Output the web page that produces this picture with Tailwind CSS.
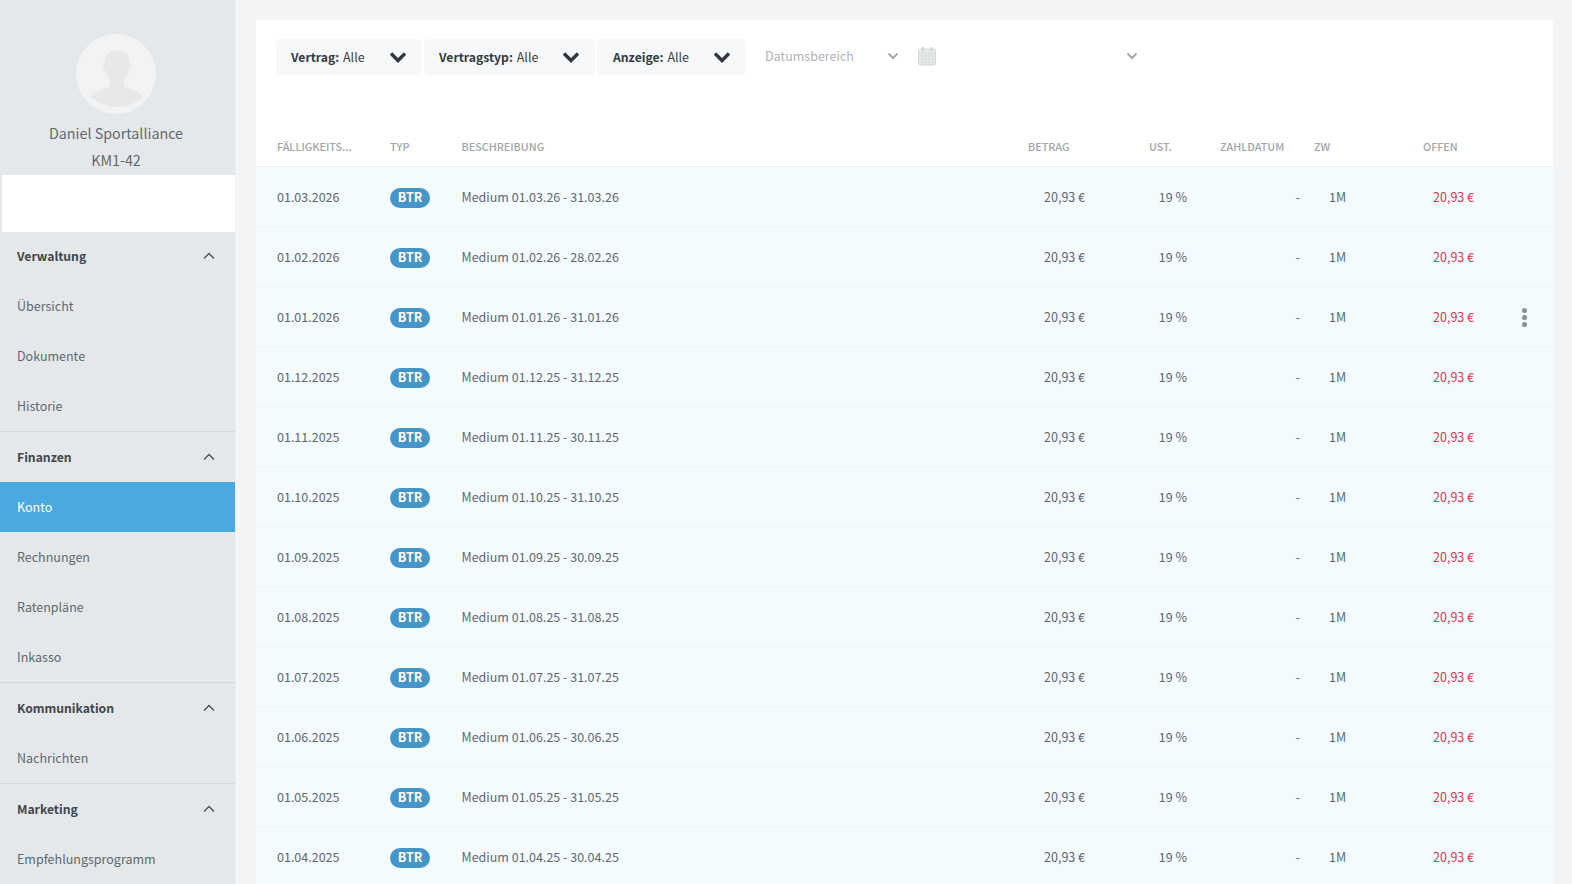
<!DOCTYPE html>
<html lang="de">
  <head>
    <meta charset="UTF-8" />
    <title>Konto</title>
    <script src="https://cdn.jsdelivr.net/npm/@tailwindcss/browser@4"></script>
  </head>
  <body class="h-[884px] overflow-hidden flex bg-[#f2f4f6] text-[#5f686f] text-[12.5px] font-['Noto_Sans_CJK_SC','Liberation_Sans',sans-serif]">
    <!-- Sidebar -->
    <aside class="w-[236px] shrink-0 h-[884px] overflow-hidden bg-[#e5e8eb] border-r border-[#edeff1]">
      <div class="h-[175px] pt-[34px] flex flex-col items-center pr-[3px]">
        <svg class="w-[80px] h-[80px] -ml-[1px]" viewBox="0 0 80 80">
          <circle cx="40" cy="40" r="40" fill="#f3f3f3" />
          <path d="M40.500 16c-7.500 0-12 5-12 12 0 2-1.500 2-1.500 4.500 0 2 1 3 2 3.500 1 4 3 7.500 5 10v5c-1 2-3 3-8 4.500-4 1.200-9 3-11.500 7.500a40 40 0 0 0 53 0c-2.500-4.500-7.500-6.300-11.500-7.500-5-1.500-7-2.500-8-4.500v-5c2-2.500 4-6 5-10 1-.5 2-1.500 2-3.500 0-2.500-1.500-2.500-1.500-4.500 0-7-4.500-12-13-12z" fill="#e8e8e8" />
        </svg>
        <div class="mt-[5px] text-[14.300px] leading-[27px]">Daniel Sportalliance</div>
        <div class="text-[14.300px] leading-[27px]">KM1-42</div>
      </div>
      <div class="h-[57px] ml-[2px] w-[233px] bg-white"></div>
      <nav id="nav" class="w-[235px] -mt-[1px]"></nav>
    </aside>

    <!-- Inhalt -->
    <main class="flex-1 min-w-0 pt-[20px] pl-[20px] pr-[19px]">
      <div class="bg-white h-[864px] overflow-hidden">
        <!-- Filter -->
        <div class="h-[147px] pt-[19px] pl-[20px] flex items-start">
          <div class="w-[146px] h-[36px] rounded-[5px] bg-[#f7f8fa] flex items-center justify-between pl-[15px] pr-[15px] text-[#3b434a]">
            <span><b class="font-bold text-[12.200px] text-[#333b42] mr-[1px]">Vertrag:</b> Alle</span>
            <svg class="w-[18px] h-[12px]" viewBox="0 0 18 12"><path d="M2 2.500l7 7 7-7" fill="none" stroke="#2f3841" stroke-width="3.400" /></svg>
          </div>
          <div class="ml-[2px] w-[171px] h-[36px] rounded-[5px] bg-[#f7f8fa] flex items-center justify-between pl-[15px] pr-[15px] text-[#3b434a]">
            <span><b class="font-bold text-[12.200px] text-[#333b42] mr-[1px]">Vertragstyp:</b> Alle</span>
            <svg class="w-[18px] h-[12px]" viewBox="0 0 18 12"><path d="M2 2.500l7 7 7-7" fill="none" stroke="#2f3841" stroke-width="3.400" /></svg>
          </div>
          <div class="ml-[2px] w-[149px] h-[36px] rounded-[5px] bg-[#f7f8fa] flex items-center justify-between pl-[16px] pr-[15px] text-[#3b434a]">
            <span><b class="font-bold text-[12.200px] text-[#333b42] mr-[1px]">Anzeige:</b> Alle</span>
            <svg class="w-[18px] h-[12px]" viewBox="0 0 18 12"><path d="M2 2.500l7 7 7-7" fill="none" stroke="#2f3841" stroke-width="3.400" /></svg>
          </div>
          <div class="h-[36px] ml-[19px] -mt-[1px] flex items-center text-[#b0b3b7]">
            <span class="w-[122px]">Datumsbereich</span>
            <svg class="w-[12px] h-[8px]" viewBox="0 0 12 8"><path d="M1.500 1.500l4.500 4.500 4.500-4.500" fill="none" stroke="#a6a9ad" stroke-width="2" /></svg>
            <svg class="ml-[19px] w-[18px] h-[20px]" viewBox="0 0 18 20">
              <path d="M.5 4.500a1.500 1.500 0 0 1 1.500-1.500h14a1.500 1.500 0 0 1 1.500 1.500v13a1.500 1.500 0 0 1-1.500 1.500h-14a1.500 1.500 0 0 1-1.500-1.500z" fill="#eceded" stroke="#d3d5d8" />
              <path d="M.5 7h17M.5 10h17M.5 13h17M.5 16h17M4 7v12M7.500 7v12M11 7v12M14.500 7v12" stroke="#d3d5d8" stroke-width=".8" />
              <rect x="3.500" y="1" width="2.500" height="4.500" rx="1.200" fill="#d3d5d8" />
              <rect x="12" y="1" width="2.500" height="4.500" rx="1.200" fill="#d3d5d8" />
            </svg>
            <svg class="ml-[190px] -mt-[1px] w-[12px] h-[8px]" viewBox="0 0 12 8"><path d="M1.500 1.500l4.500 4.500 4.500-4.500" fill="none" stroke="#a6a9ad" stroke-width="2" /></svg>
          </div>
        </div>

        <!-- Tabelle -->
        <div class="-mt-[30px] h-[18px] pl-[21px] grid grid-cols-[113px_71.500px_566.500px_121px_71px_94px_109px_1fr] items-center text-[10.800px] font-medium text-[#a2a5a9]">
          <span>FÄLLIGKEITS...</span>
          <span>TYP</span>
          <span>BESCHREIBUNG</span>
          <span>BETRAG</span>
          <span>UST.</span>
          <span>ZAHLDATUM</span>
          <span>ZW</span>
          <span>OFFEN</span>
        </div>
        <div id="rows" class="mt-[11px] border-t border-[#edf2f4]"></div>
      </div>
    </main>

    <script>
      const chevron =
        '<svg class="w-[12px] h-[8px]" viewBox="0 0 12 8"><path d="M1 6.500l5-5 5 5" fill="none" stroke="#4a5158" stroke-width="1.400" /></svg>';

      const menu = [
        ["Verwaltung", ["Übersicht", "Dokumente", "Historie"]],
        ["Finanzen", ["Konto", "Rechnungen", "Ratenpläne", "Inkasso"]],
        ["Kommunikation", ["Nachrichten"]],
        ["Marketing", ["Empfehlungsprogramm"]],
      ];

      document.getElementById("nav").innerHTML = menu
        .map(([title, items], i) => {
          const links = items
            .map((item) =>
              item === "Konto"
                ? `<div class="h-[50px] pl-[17px] flex items-center bg-[#4aa9de] text-white">${item}</div>`
                : `<div class="h-[50px] pl-[17px] flex items-center">${item}</div>`
            )
            .join("");
          return `<section class="${i < 3 ? "border-b border-[#d5d8db]" : ""}">
            <div class="h-[50px] pl-[17px] pr-[20px] flex items-center justify-between font-bold text-[12.200px] text-[#3f464d]">${title}${chevron}</div>
            ${links}
          </section>`;
        })
        .join("");

      const rows = [
        ["01.03.2026", "01.03.26 - 31.03.26"],
        ["01.02.2026", "01.02.26 - 28.02.26"],
        ["01.01.2026", "01.01.26 - 31.01.26"],
        ["01.12.2025", "01.12.25 - 31.12.25"],
        ["01.11.2025", "01.11.25 - 30.11.25"],
        ["01.10.2025", "01.10.25 - 31.10.25"],
        ["01.09.2025", "01.09.25 - 30.09.25"],
        ["01.08.2025", "01.08.25 - 31.08.25"],
        ["01.07.2025", "01.07.25 - 31.07.25"],
        ["01.06.2025", "01.06.25 - 30.06.25"],
        ["01.05.2025", "01.05.25 - 31.05.25"],
        ["01.04.2025", "01.04.25 - 30.04.25"],
      ];

      document.getElementById("rows").innerHTML = rows
        .map(
          ([date, period], i) => `
          <div class="h-[60px] pt-[2px] pl-[21px] grid grid-cols-[113px_71.500px_566.500px_121px_71px_94px_109px_1fr] items-center bg-[#f3fbfe] border-b border-[#ecf4f7]">
            <span>${date}</span>
            <span class="w-[40px] h-[20px] rounded-full bg-[#4596c8] text-white font-bold flex items-center justify-center">BTR</span>
            <span>Medium ${period}</span>
            <span class="text-right pr-[64px]">20,93 €</span>
            <span class="text-right pr-[33px]">19 %</span>
            <span class="text-right pr-[14px]">-</span>
            <span class="pl-[15px]">1M</span>
            <div class="flex items-center">
              <span class="w-[51px] text-right text-[#d0394f]">20,93 €</span>
              ${
                i === 2
                  ? '<span class="ml-[48px] flex flex-col gap-[2px]"><i class="block w-[5px] h-[5px] rounded-full bg-[#8a8f94]"></i><i class="block w-[5px] h-[5px] rounded-full bg-[#8a8f94]"></i><i class="block w-[5px] h-[5px] rounded-full bg-[#8a8f94]"></i></span>'
                  : ""
              }
            </div>
          </div>`
        )
        .join("");
    </script>
  </body>
</html>
